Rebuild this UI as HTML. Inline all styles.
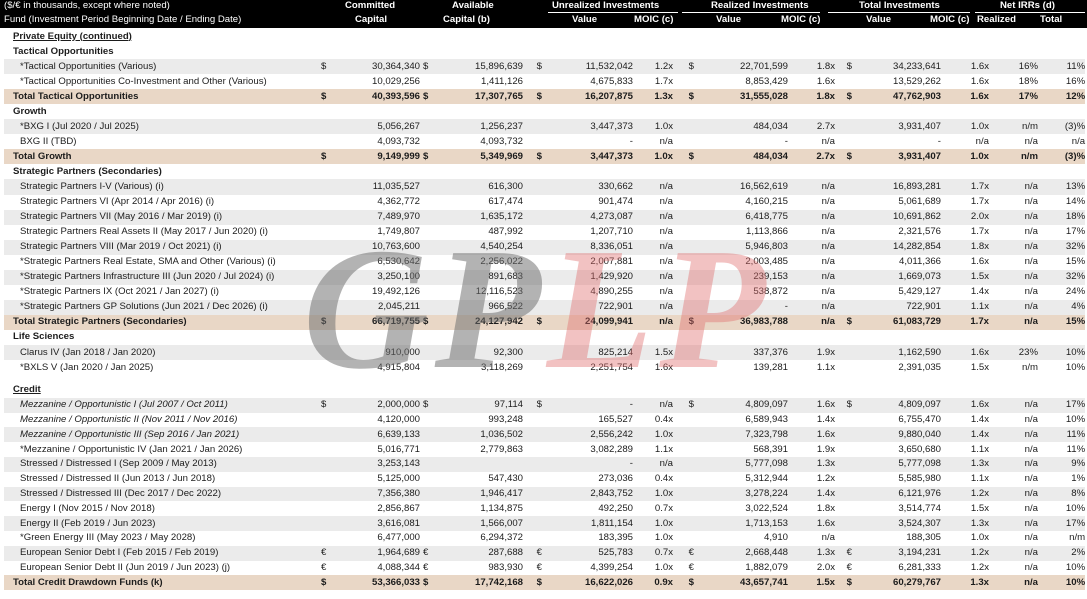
<!DOCTYPE html>
<html><head><meta charset="utf-8"><style>
*{margin:0;padding:0;box-sizing:border-box}
body{width:1087px;height:599px;overflow:hidden;background:#fff;font-family:"Liberation Sans","DejaVu Sans",sans-serif;font-size:9.6px;color:#1c1c1c;position:relative}
.hd{position:absolute;left:0;top:0;width:1087px;height:28px;background:#000;color:#fff;font-weight:bold}
.hd div{position:absolute;white-space:nowrap;line-height:12px}
.hd .n{font-weight:normal}
.ul{position:absolute;top:12px;height:1px;background:#fff}
table{position:absolute;left:4px;top:29px;border-collapse:collapse;table-layout:fixed;width:1081px}
td{height:15.05px;padding:0;white-space:nowrap;text-align:right;line-height:12px;overflow:visible}
td.l{text-align:left;padding-left:16px}
td.h{text-align:left;padding-left:9px;font-weight:bold}
td.s{text-align:left;padding-left:3px}
td.r{text-align:right;padding-right:3px}
tr.g td{background:#ebebeb}
tr.t td{background:#e9d7c6;font-weight:bold}
tr.t td.l{padding-left:9px}
tr.c td{height:14.8px}
.u{text-decoration:underline}
.i{font-style:italic}
.wm{position:absolute;left:303px;top:222px;font-family:"Liberation Serif",serif;font-weight:bold;font-style:italic;font-size:174px;letter-spacing:6px;line-height:174px;white-space:nowrap}
.wm .a{color:rgba(110,110,110,0.52)}
.wm .b{color:rgba(225,110,110,0.42)}
</style></head><body>
<div class="hd">
<div class="n" style="left:4px;top:0">($/€ in thousands, except where noted)</div>
<div class="n" style="left:4px;top:14px">Fund (Investment Period Beginning Date / Ending Date)</div>
<div style="left:345px;top:0">Committed</div>
<div style="left:355px;top:14px">Capital</div>
<div style="left:452px;top:0">Available</div>
<div style="left:443px;top:14px">Capital (b)</div>
<div style="left:552px;top:0">Unrealized Investments</div>
<div style="left:572px;top:14px">Value</div>
<div style="left:634px;top:14px">MOIC (c)</div>
<div style="left:711px;top:0">Realized Investments</div>
<div style="left:716px;top:14px">Value</div>
<div style="left:781px;top:14px">MOIC (c)</div>
<div style="left:859px;top:0">Total Investments</div>
<div style="left:866px;top:14px">Value</div>
<div style="left:930px;top:14px">MOIC (c)</div>
<div style="left:1000px;top:0">Net IRRs (d)</div>
<div style="left:977px;top:14px">Realized</div>
<div style="left:1040px;top:14px">Total</div>
<span class="ul" style="left:548px;width:130px"></span>
<span class="ul" style="left:682px;width:138px"></span>
<span class="ul" style="left:828px;width:142px"></span>
<span class="ul" style="left:975px;width:110px"></span>
</div>
<table>
<colgroup><col style="width:314px"><col style="width:12px"><col style="width:90px"><col style="width:12px"><col style="width:91px"><col style="width:22px"><col style="width:88px"><col style="width:40px"><col style="width:24px"><col style="width:91px"><col style="width:47px"><col style="width:20px"><col style="width:86px"><col style="width:48px"><col style="width:49px"><col style="width:47px"></colgroup>
<tr><td class="h" colspan="16"><span class="u">Private Equity (continued)</span></td></tr>
<tr><td class="h" colspan="16">Tactical Opportunities</td></tr>
<tr class="g"><td class="l">*Tactical Opportunities (Various)</td><td class="s">$</td><td>30,364,340</td><td class="s">$</td><td>15,896,639</td><td class="r">$</td><td>11,532,042</td><td>1.2x</td><td class="r">$</td><td>22,701,599</td><td>1.8x</td><td class="r">$</td><td>34,233,641</td><td>1.6x</td><td>16%</td><td>11%</td></tr>
<tr><td class="l">*Tactical Opportunities Co-Investment and Other (Various)</td><td></td><td>10,029,256</td><td></td><td>1,411,126</td><td></td><td>4,675,833</td><td>1.7x</td><td></td><td>8,853,429</td><td>1.6x</td><td></td><td>13,529,262</td><td>1.6x</td><td>18%</td><td>16%</td></tr>
<tr class="t"><td class="l">Total Tactical Opportunities</td><td class="s">$</td><td>40,393,596</td><td class="s">$</td><td>17,307,765</td><td class="r">$</td><td>16,207,875</td><td>1.3x</td><td class="r">$</td><td>31,555,028</td><td>1.8x</td><td class="r">$</td><td>47,762,903</td><td>1.6x</td><td>17%</td><td>12%</td></tr>
<tr><td class="h" colspan="16">Growth</td></tr>
<tr class="g"><td class="l">*BXG I (Jul 2020 / Jul 2025)</td><td></td><td>5,056,267</td><td></td><td>1,256,237</td><td></td><td>3,447,373</td><td>1.0x</td><td></td><td>484,034</td><td>2.7x</td><td></td><td>3,931,407</td><td>1.0x</td><td>n/m</td><td>(3)%</td></tr>
<tr><td class="l">BXG II (TBD)</td><td></td><td>4,093,732</td><td></td><td>4,093,732</td><td></td><td>-</td><td>n/a</td><td></td><td>-</td><td>n/a</td><td></td><td>-</td><td>n/a</td><td>n/a</td><td>n/a</td></tr>
<tr class="t"><td class="l">Total Growth</td><td class="s">$</td><td>9,149,999</td><td class="s">$</td><td>5,349,969</td><td class="r">$</td><td>3,447,373</td><td>1.0x</td><td class="r">$</td><td>484,034</td><td>2.7x</td><td class="r">$</td><td>3,931,407</td><td>1.0x</td><td>n/m</td><td>(3)%</td></tr>
<tr><td class="h" colspan="16">Strategic Partners (Secondaries)</td></tr>
<tr class="g"><td class="l">Strategic Partners I-V (Various) (i)</td><td></td><td>11,035,527</td><td></td><td>616,300</td><td></td><td>330,662</td><td>n/a</td><td></td><td>16,562,619</td><td>n/a</td><td></td><td>16,893,281</td><td>1.7x</td><td>n/a</td><td>13%</td></tr>
<tr><td class="l">Strategic Partners VI (Apr 2014 / Apr 2016) (i)</td><td></td><td>4,362,772</td><td></td><td>617,474</td><td></td><td>901,474</td><td>n/a</td><td></td><td>4,160,215</td><td>n/a</td><td></td><td>5,061,689</td><td>1.7x</td><td>n/a</td><td>14%</td></tr>
<tr class="g"><td class="l">Strategic Partners VII (May 2016 / Mar 2019) (i)</td><td></td><td>7,489,970</td><td></td><td>1,635,172</td><td></td><td>4,273,087</td><td>n/a</td><td></td><td>6,418,775</td><td>n/a</td><td></td><td>10,691,862</td><td>2.0x</td><td>n/a</td><td>18%</td></tr>
<tr><td class="l">Strategic Partners Real Assets II (May 2017 / Jun 2020) (i)</td><td></td><td>1,749,807</td><td></td><td>487,992</td><td></td><td>1,207,710</td><td>n/a</td><td></td><td>1,113,866</td><td>n/a</td><td></td><td>2,321,576</td><td>1.7x</td><td>n/a</td><td>17%</td></tr>
<tr class="g"><td class="l">Strategic Partners VIII (Mar 2019 / Oct 2021) (i)</td><td></td><td>10,763,600</td><td></td><td>4,540,254</td><td></td><td>8,336,051</td><td>n/a</td><td></td><td>5,946,803</td><td>n/a</td><td></td><td>14,282,854</td><td>1.8x</td><td>n/a</td><td>32%</td></tr>
<tr><td class="l">*Strategic Partners Real Estate, SMA and Other (Various) (i)</td><td></td><td>6,530,642</td><td></td><td>2,256,022</td><td></td><td>2,007,881</td><td>n/a</td><td></td><td>2,003,485</td><td>n/a</td><td></td><td>4,011,366</td><td>1.6x</td><td>n/a</td><td>15%</td></tr>
<tr class="g"><td class="l">*Strategic Partners Infrastructure III (Jun 2020 / Jul 2024) (i)</td><td></td><td>3,250,100</td><td></td><td>891,683</td><td></td><td>1,429,920</td><td>n/a</td><td></td><td>239,153</td><td>n/a</td><td></td><td>1,669,073</td><td>1.5x</td><td>n/a</td><td>32%</td></tr>
<tr><td class="l">*Strategic Partners IX (Oct 2021 / Jan 2027) (i)</td><td></td><td>19,492,126</td><td></td><td>12,116,523</td><td></td><td>4,890,255</td><td>n/a</td><td></td><td>538,872</td><td>n/a</td><td></td><td>5,429,127</td><td>1.4x</td><td>n/a</td><td>24%</td></tr>
<tr class="g"><td class="l">*Strategic Partners GP Solutions (Jun 2021 / Dec 2026) (i)</td><td></td><td>2,045,211</td><td></td><td>966,522</td><td></td><td>722,901</td><td>n/a</td><td></td><td>-</td><td>n/a</td><td></td><td>722,901</td><td>1.1x</td><td>n/a</td><td>4%</td></tr>
<tr class="t"><td class="l">Total Strategic Partners (Secondaries)</td><td class="s">$</td><td>66,719,755</td><td class="s">$</td><td>24,127,942</td><td class="r">$</td><td>24,099,941</td><td>n/a</td><td class="r">$</td><td>36,983,788</td><td>n/a</td><td class="r">$</td><td>61,083,729</td><td>1.7x</td><td>n/a</td><td>15%</td></tr>
<tr><td class="h" colspan="16">Life Sciences</td></tr>
<tr class="g"><td class="l">Clarus IV (Jan 2018 / Jan 2020)</td><td></td><td>910,000</td><td></td><td>92,300</td><td></td><td>825,214</td><td>1.5x</td><td></td><td>337,376</td><td>1.9x</td><td></td><td>1,162,590</td><td>1.6x</td><td>23%</td><td>10%</td></tr>
<tr><td class="l">*BXLS V (Jan 2020 / Jan 2025)</td><td></td><td>4,915,804</td><td></td><td>3,118,269</td><td></td><td>2,251,754</td><td>1.6x</td><td></td><td>139,281</td><td>1.1x</td><td></td><td>2,391,035</td><td>1.5x</td><td>n/m</td><td>10%</td></tr>
<tr><td colspan="16" style="height:8px"></td></tr>
<tr class="c"><td class="h" colspan="16"><span class="u">Credit</span></td></tr>
<tr class="g c"><td class="l i">Mezzanine / Opportunistic I (Jul 2007 / Oct 2011)</td><td class="s">$</td><td>2,000,000</td><td class="s">$</td><td>97,114</td><td class="r">$</td><td>-</td><td>n/a</td><td class="r">$</td><td>4,809,097</td><td>1.6x</td><td class="r">$</td><td>4,809,097</td><td>1.6x</td><td>n/a</td><td>17%</td></tr>
<tr class="c"><td class="l i">Mezzanine / Opportunistic II (Nov 2011 / Nov 2016)</td><td></td><td>4,120,000</td><td></td><td>993,248</td><td></td><td>165,527</td><td>0.4x</td><td></td><td>6,589,943</td><td>1.4x</td><td></td><td>6,755,470</td><td>1.4x</td><td>n/a</td><td>10%</td></tr>
<tr class="g c"><td class="l i">Mezzanine / Opportunistic III (Sep 2016 / Jan 2021)</td><td></td><td>6,639,133</td><td></td><td>1,036,502</td><td></td><td>2,556,242</td><td>1.0x</td><td></td><td>7,323,798</td><td>1.6x</td><td></td><td>9,880,040</td><td>1.4x</td><td>n/a</td><td>11%</td></tr>
<tr class="c"><td class="l">*Mezzanine / Opportunistic IV (Jan 2021 / Jan 2026)</td><td></td><td>5,016,771</td><td></td><td>2,779,863</td><td></td><td>3,082,289</td><td>1.1x</td><td></td><td>568,391</td><td>1.9x</td><td></td><td>3,650,680</td><td>1.1x</td><td>n/a</td><td>11%</td></tr>
<tr class="g c"><td class="l">Stressed / Distressed I (Sep 2009 / May 2013)</td><td></td><td>3,253,143</td><td></td><td></td><td></td><td>-</td><td>n/a</td><td></td><td>5,777,098</td><td>1.3x</td><td></td><td>5,777,098</td><td>1.3x</td><td>n/a</td><td>9%</td></tr>
<tr class="c"><td class="l">Stressed / Distressed II (Jun 2013 / Jun 2018)</td><td></td><td>5,125,000</td><td></td><td>547,430</td><td></td><td>273,036</td><td>0.4x</td><td></td><td>5,312,944</td><td>1.2x</td><td></td><td>5,585,980</td><td>1.1x</td><td>n/a</td><td>1%</td></tr>
<tr class="g c"><td class="l">Stressed / Distressed III (Dec 2017 / Dec 2022)</td><td></td><td>7,356,380</td><td></td><td>1,946,417</td><td></td><td>2,843,752</td><td>1.0x</td><td></td><td>3,278,224</td><td>1.4x</td><td></td><td>6,121,976</td><td>1.2x</td><td>n/a</td><td>8%</td></tr>
<tr class="c"><td class="l">Energy I (Nov 2015 / Nov 2018)</td><td></td><td>2,856,867</td><td></td><td>1,134,875</td><td></td><td>492,250</td><td>0.7x</td><td></td><td>3,022,524</td><td>1.8x</td><td></td><td>3,514,774</td><td>1.5x</td><td>n/a</td><td>10%</td></tr>
<tr class="g c"><td class="l">Energy II (Feb 2019 / Jun 2023)</td><td></td><td>3,616,081</td><td></td><td>1,566,007</td><td></td><td>1,811,154</td><td>1.0x</td><td></td><td>1,713,153</td><td>1.6x</td><td></td><td>3,524,307</td><td>1.3x</td><td>n/a</td><td>17%</td></tr>
<tr class="c"><td class="l">*Green Energy III (May 2023 / May 2028)</td><td></td><td>6,477,000</td><td></td><td>6,294,372</td><td></td><td>183,395</td><td>1.0x</td><td></td><td>4,910</td><td>n/a</td><td></td><td>188,305</td><td>1.0x</td><td>n/a</td><td>n/m</td></tr>
<tr class="g c"><td class="l">European Senior Debt I (Feb 2015 / Feb 2019)</td><td class="s">€</td><td>1,964,689</td><td class="s">€</td><td>287,688</td><td class="r">€</td><td>525,783</td><td>0.7x</td><td class="r">€</td><td>2,668,448</td><td>1.3x</td><td class="r">€</td><td>3,194,231</td><td>1.2x</td><td>n/a</td><td>2%</td></tr>
<tr class="c"><td class="l">European Senior Debt II (Jun 2019 / Jun 2023) (j)</td><td class="s">€</td><td>4,088,344</td><td class="s">€</td><td>983,930</td><td class="r">€</td><td>4,399,254</td><td>1.0x</td><td class="r">€</td><td>1,882,079</td><td>2.0x</td><td class="r">€</td><td>6,281,333</td><td>1.2x</td><td>n/a</td><td>10%</td></tr>
<tr class="t c"><td class="l">Total Credit Drawdown Funds (k)</td><td class="s">$</td><td>53,366,033</td><td class="s">$</td><td>17,742,168</td><td class="r">$</td><td>16,622,026</td><td>0.9x</td><td class="r">$</td><td>43,657,741</td><td>1.5x</td><td class="r">$</td><td>60,279,767</td><td>1.3x</td><td>n/a</td><td>10%</td></tr>
</table>
<div class="wm"><span class="a">GP</span><span class="b">LP</span></div>
</body></html>
